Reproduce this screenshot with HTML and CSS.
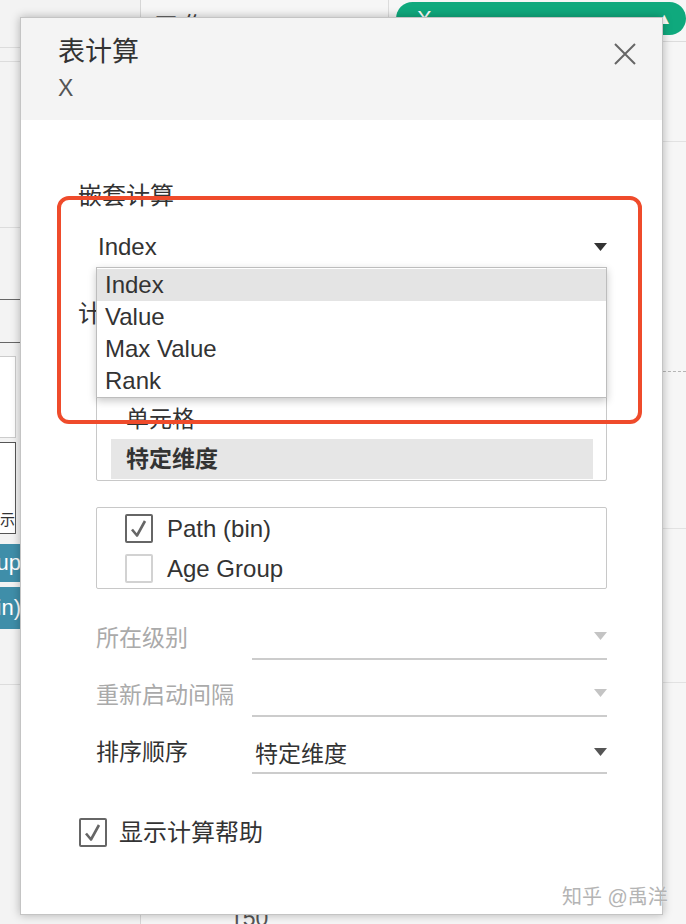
FILE: index.html
```html
<!DOCTYPE html>
<html lang="zh-CN">
<head>
<meta charset="utf-8">
<title>表计算</title>
<link rel="stylesheet" href="styles.css">
</head>
<body>
<div class="app">
  <aside class="side">
    <div class="s-a"></div>
    <div class="s-b"></div>
    <div class="s-c"></div>
    <div class="s-d"></div>
    <div class="s-e"></div>
    <div class="card card-light"></div>
    <div class="card card-dark"><span>显示</span></div>
    <div class="pill pill-1"><span>Age Group</span></div>
    <div class="pill pill-2"><span>Path (bin)</span></div>
    <div class="s-f"></div>
  </aside>
  <main class="view">
    <div class="toolbar">
      <div class="tb-cell"><span class="tb-text">工作</span></div>
      <div class="green-pill"><span>X</span><span class="gp-icon">▲</span></div>
    </div>
    <div class="grid-lines">
      <div class="gl gl1"></div>
      <div class="gl gl2"></div>
      <div class="gl gl3"></div>
      <div class="gl gl4"></div>
    </div>
    <div class="axis-label">150</div>
  </main>
</div>

<section class="dialog">
  <header class="dlg-head">
    <div class="dlg-titles">
      <div class="dlg-title">表计算</div>
      <div class="dlg-sub">X</div>
    </div>
    <button class="dlg-close" aria-label="关闭">
      <svg width="22" height="22" viewBox="0 0 22 22"><path d="M1 1 L21 21 M21 1 L1 21" stroke="#666" stroke-width="2" fill="none"/></svg>
    </button>
  </header>

  <div class="dlg-body">
    <div class="label">嵌套计算</div>
    <div class="select nested">
      <span class="sel-value">Index</span>
      <svg class="arrow" width="13" height="8" viewBox="0 0 13 8"><polygon points="0,0 13,0 6.5,8" fill="#333"/></svg>
      <ul class="dropdown">
        <li class="dd-item active">Index</li>
        <li class="dd-item">Value</li>
        <li class="dd-item">Max Value</li>
        <li class="dd-item">Rank</li>
      </ul>
    </div>

    <div class="label label-calc">计算依据</div>
    <div class="listbox">
      <div class="lb-row">区</div>
      <div class="lb-row">单元格</div>
      <div class="lb-row selected">特定维度</div>
    </div>

    <div class="checklist">
      <div class="check-row">
        <span class="checkbox checked"><svg width="24" height="25" viewBox="0 0 24 25"><path d="M5 13.5 L10 19.5 L18 5" stroke="#666" stroke-width="2.6" fill="none" stroke-linejoin="round"/></svg></span>
        <span class="check-text">Path (bin)</span>
      </div>
      <div class="check-row">
        <span class="checkbox"></span>
        <span class="check-text">Age Group</span>
      </div>
    </div>

    <div class="fields">
      <div class="field disabled">
        <span class="field-label">所在级别</span>
        <div class="select line">
          <span class="sel-value"></span>
          <svg class="arrow" width="13" height="8" viewBox="0 0 13 8"><polygon points="0,0 13,0 6.5,8" fill="#c4c4c4"/></svg>
        </div>
      </div>
      <div class="field disabled">
        <span class="field-label">重新启动间隔</span>
        <div class="select line">
          <span class="sel-value"></span>
          <svg class="arrow" width="13" height="8" viewBox="0 0 13 8"><polygon points="0,0 13,0 6.5,8" fill="#c4c4c4"/></svg>
        </div>
      </div>
      <div class="field">
        <span class="field-label">排序顺序</span>
        <div class="select line">
          <span class="sel-value">特定维度</span>
          <svg class="arrow" width="13" height="8" viewBox="0 0 13 8"><polygon points="0,0 13,0 6.5,8" fill="#555"/></svg>
        </div>
      </div>
    </div>

    <div class="help-row">
      <span class="checkbox checked"><svg width="24" height="25" viewBox="0 0 24 25"><path d="M5 13.5 L10 19.5 L18 5" stroke="#666" stroke-width="2.6" fill="none" stroke-linejoin="round"/></svg></span>
      <span class="check-text">显示计算帮助</span>
    </div>
  </div>

  <div class="highlight-box"></div>
</section>

<div class="watermark">知乎 @禹洋</div>
</body>
</html>
```

FILE: styles.css
```css
* { box-sizing: border-box; }

html, body {
  margin: 0;
  padding: 0;
}

body {
  width: 686px;
  height: 924px;
  overflow: hidden;
  position: relative;
  font-family: "Liberation Sans", "Noto Sans CJK SC", sans-serif;
  color: #333;
  background: #f4f4f4;
}

/* ---------- background application ---------- */
.app {
  display: grid;
  grid-template-columns: 141px 1fr;
  height: 924px;
}

.side {
  display: flex;
  flex-direction: column;
  background: #f3f3f3;
  border-right: 1px solid #d6d6d6;
  overflow: hidden;
}

.s-a { height: 48px; border-bottom: 1px solid #dcdcdc; }
.s-b { height: 14px; border-bottom: 1px solid #dcdcdc; }
.s-c { height: 166px; border-bottom: 1px solid #dcdcdc; }
.s-d { height: 72px; border-bottom: 1px solid #666; }
.s-e { height: 43px; border-bottom: 1px solid #666; }

.card {
  width: 16px;
  background: #fff;
  border: 1px solid #ccc;
  border-left: none;
}
.card-light { margin-top: 13px; height: 82px; }
.card-dark {
  margin-top: 4px;
  height: 92px;
  border-color: #555;
  display: flex;
  align-items: flex-end;
  justify-content: flex-end;
  overflow: hidden;
  font-size: 15px;
  line-height: 26px;
  white-space: nowrap;
}

.pill {
  width: 21px;
  background: #3f8ea9;
  color: #fff;
  display: flex;
  justify-content: flex-end;
  align-items: center;
  overflow: hidden;
  white-space: nowrap;
  font-size: 22px;
}
.pill-1 { margin-top: 10px; height: 38px; }
.pill-2 { margin-top: 5px; height: 42px; }

.s-f { margin-top: 55px; border-top: 1px solid #dcdcdc; }

.view {
  display: flex;
  flex-direction: column;
  background: #f6f6f6;
  overflow: hidden;
}

.toolbar {
  height: 48px;
  display: flex;
  border-bottom: 1px solid #dcdcdc;
}

.tb-cell {
  width: 248px;
  border-right: 1px solid #dcdcdc;
  padding: 6px 0 0 13px;
}
.tb-text {
  font-size: 24px;
  color: #444;
  letter-spacing: 4px;
}

.green-pill {
  flex: 1;
  margin: 2px 0 6px 7px;
  background: #0fa97d;
  border-radius: 20px;
  color: #fff;
  display: flex;
  align-items: center;
  justify-content: space-between;
  padding: 0 14px 0 21px;
  font-size: 22px;
}
.gp-icon { font-size: 16px; }

.grid-lines { display: flex; flex-direction: column; }
.gl { border-bottom: 1px solid #e2e2e2; }
.gl1 { height: 100px; }
.gl2 { height: 230px; border-bottom: 1px dashed #b5b5b5; }
.gl3 { height: 157px; }
.gl4 { height: 154px; }

.axis-label {
  margin-top: 222px;
  padding-left: 89px;
  font-size: 23px;
  line-height: 26px;
  color: #555;
}

/* ---------- dialog ---------- */
.dialog {
  position: absolute;
  left: 20px;
  top: 17px;
  width: 643px;
  height: 898px;
  background: #fff;
  border: 1px solid #c4c4c4;
  box-shadow: 0 0 9px rgba(0, 0, 0, 0.28);
  display: flex;
  flex-direction: column;
}

.dlg-head {
  height: 102px;
  background: #f4f4f4;
  display: flex;
  justify-content: space-between;
  align-items: flex-start;
  padding: 17px 26px 0 37px;
}

.dlg-title {
  font-size: 27px;
  line-height: 34px;
  color: #333;
}
.dlg-sub {
  margin-top: 4px;
  font-size: 23px;
  line-height: 30px;
  color: #555;
}

.dlg-close {
  margin-top: 8px;
  width: 22px;
  height: 22px;
  padding: 0;
  border: none;
  background: none;
  display: block;
}
.dlg-close svg { display: block; }

.dlg-body {
  padding: 61px 55px 0 57px;
  display: flex;
  flex-direction: column;
}

.label {
  font-size: 24px;
  line-height: 30px;
}
.label-calc { margin-top: 30px; }

.select {
  display: flex;
  align-items: center;
  justify-content: space-between;
  position: relative;
  font-size: 24px;
}
.arrow { display: block; flex: none; }

.nested {
  margin: 16px 0 0 18px;
  height: 42px;
  padding-left: 2px;
  border-bottom: 2px solid #ccc;
}

.dropdown {
  position: absolute;
  top: 100%;
  left: 0;
  right: 0;
  margin: 0;
  padding: 1px 0 0;
  list-style: none;
  background: #fff;
  border: 1px solid #bdbdbd;
  box-shadow: 0 3px 8px rgba(0, 0, 0, 0.22);
  height: 131px;
  z-index: 2;
}
.dd-item {
  height: 32px;
  line-height: 32px;
  padding-left: 8px;
  font-size: 24px;
}
.dd-item.active { background: #e4e4e4; }

.listbox {
  margin: 6px 0 0 18px;
  border: 1px solid #c8c8c8;
  border-radius: 2px;
  padding: 23px 13px 1px 14px;
}
.lb-row {
  height: 40px;
  line-height: 40px;
  padding-left: 15px;
  font-size: 23px;
}
.lb-row.selected {
  background: #e6e6e6;
  font-weight: bold;
}

.checklist {
  margin: 26px 0 0 18px;
  border: 1px solid #c8c8c8;
  border-radius: 2px;
  padding: 6px 0 5px 28px;
  display: flex;
  flex-direction: column;
  gap: 11px;
}

.check-row,
.help-row {
  display: flex;
  align-items: center;
  gap: 14px;
  height: 29px;
}

.checkbox {
  width: 28px;
  height: 29px;
  flex: none;
  border: 2px solid #d2d2d2;
  border-radius: 2px;
  display: flex;
  align-items: center;
  justify-content: center;
  background: #fff;
}
.checkbox.checked { border-color: #666; }
.checkbox svg { display: block; }

.check-text {
  font-size: 24px;
  line-height: 29px;
}

.fields {
  margin: 28px 0 0 18px;
  display: flex;
  flex-direction: column;
  gap: 14px;
}

.field {
  display: grid;
  grid-template-columns: 156px 1fr;
  height: 43px;
}
.field-label {
  font-size: 23px;
  line-height: 43px;
}
.field.disabled .field-label { color: #aaa; }

.line {
  border-bottom: 2px solid #ccc;
  padding-left: 3px;
  font-size: 23px;
}
.field.disabled .line .arrow { margin-top: -4px; }

.help-row {
  margin-top: 44px;
  margin-left: 1px;
  gap: 12px;
}

.highlight-box {
  position: absolute;
  left: 36px;
  top: 178px;
  width: 585px;
  height: 228px;
  border: 4px solid #ef4b2b;
  border-radius: 12px;
  z-index: 3;
  pointer-events: none;
}

.watermark {
  position: absolute;
  left: 562px;
  top: 883px;
  font-size: 20px;
  line-height: 28px;
  color: #b4b4b4;
  text-shadow: 0 0 2px #fff;
}
```
